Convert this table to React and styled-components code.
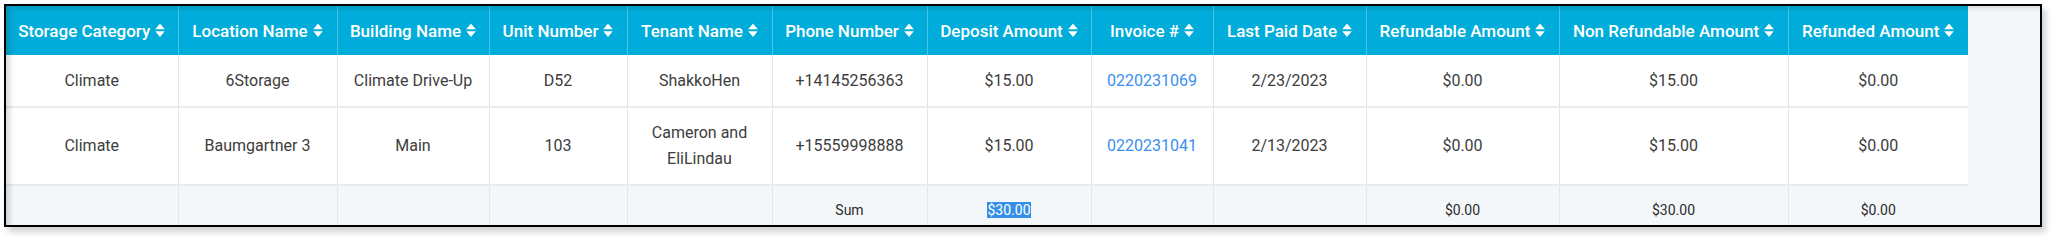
import React from "react";
import styled, { createGlobalStyle } from "styled-components";

const Global = createGlobalStyle`
  html, body { margin: 0; padding: 0; background: #ffffff; }
  body { font-family: Roboto, "Liberation Sans", Arial, sans-serif; }
`;

const Page = styled.div`
  padding: 4px 0 0 4px;
  width: 2054px;
  height: 240px;
  box-sizing: border-box;
`;

const Frame = styled.div`
  position: relative;
  width: 2038px;
  height: 223px;
  box-sizing: border-box;
  border: 2px solid #000;
  overflow: hidden;
  background: #f4f7f9;
  box-shadow: 4px 5px 6px rgba(0, 0, 0, 0.18);
  &::after {
    content: "";
    position: absolute;
    inset: 0;
    pointer-events: none;
    box-shadow: inset 5px 3px 6px -2px rgba(0, 0, 0, 0.18);
  }
`;

const Table = styled.table`
  border-collapse: collapse;
  table-layout: fixed;
  width: 1962px;
  font-family: Roboto, "Liberation Sans", Arial, sans-serif;
`;

const Col = styled.col`
  width: ${(p) => p.$w}px;
`;

const Th = styled.th`
  height: 49px;
  padding: 0 4px;
  background: #00acd9;
  color: #ffffff;
  font-size: 17px;
  font-weight: 500;
  text-align: center;
  white-space: nowrap;
  border-left: 1px solid #4fc3e4;
  &:first-child { border-left: none; }
`;

const HeadInner = styled.span`
  display: inline-flex;
  align-items: center;
  gap: 5px;
`;

const Td = styled.td`
  height: ${(p) => p.$h}px;
  padding: 0 8px;
  background: ${(p) => (p.$foot ? "#f4f7f9" : "#ffffff")};
  color: ${(p) => (p.$foot ? "#2a2a2a" : "#3d3d3d")};
  font-size: ${(p) => (p.$foot ? 14 : 16)}px;
  line-height: 26px;
  text-align: center;
  vertical-align: middle;
  box-sizing: border-box;
  border-left: 1px solid #e1e6ea;
  border-bottom: ${(p) => (p.$foot ? "none" : "2px solid #e8ecef")};
  &:first-child { border-left: none; }
`;

const Link = styled.a`
  color: #3b8ff0;
  text-decoration: none;
`;

const Selected = styled.span`
  background: #3390e6;
  color: #ffffff;
`;

const SortIcon = () => (
  <svg width="10" height="15" viewBox="0 0 10 15" aria-hidden="true">
    <path d="M5 0.5 L9.8 6.2 L0.2 6.2 Z" fill="#ffffff" />
    <path d="M0.2 8.3 L9.8 8.3 L5 14 Z" fill="#ffffff" />
  </svg>
);

const columns = [
  ["Storage Category", 172],
  ["Location Name", 159],
  ["Building Name", 152],
  ["Unit Number", 138],
  ["Tenant Name", 145],
  ["Phone Number", 155],
  ["Deposit Amount", 164],
  ["Invoice #", 122],
  ["Last Paid Date", 153],
  ["Refundable Amount", 193],
  ["Non Refundable Amount", 229],
  ["Refunded Amount", 180],
];

const rows = [
  {
    h: 52,
    cells: ["Climate", "6Storage", "Climate Drive-Up", "D52", "ShakkoHen", "+14145256363", "$15.00", "0220231069", "2/23/2023", "$0.00", "$15.00", "$0.00"],
  },
  {
    h: 78,
    cells: ["Climate", "Baumgartner 3", "Main", "103", "Cameron and EliLindau", "+15559998888", "$15.00", "0220231041", "2/13/2023", "$0.00", "$15.00", "$0.00"],
  },
];

const footer = ["", "", "", "", "", "Sum", "$30.00", "", "", "$0.00", "$30.00", "$0.00"];

export default function App() {
  return (
    <>
      <Global />
      <Page>
        <Frame>
          <Table>
            <colgroup>
              {columns.map(([name, w]) => (
                <Col key={name} $w={w} />
              ))}
            </colgroup>
            <thead>
              <tr>
                {columns.map(([name]) => (
                  <Th key={name}>
                    <HeadInner>
                      {name}
                      <SortIcon />
                    </HeadInner>
                  </Th>
                ))}
              </tr>
            </thead>
            <tbody>
              {rows.map((r, ri) => (
                <tr key={ri}>
                  {r.cells.map((c, ci) => (
                    <Td key={ci} $h={r.h}>
                      {ci === 7 ? <Link href="#">{c}</Link> : c}
                    </Td>
                  ))}
                </tr>
              ))}
              <tr>
                {footer.map((c, ci) => (
                  <Td key={ci} $h={48} $foot>
                    {ci === 6 ? <Selected>{c}</Selected> : c}
                  </Td>
                ))}
              </tr>
            </tbody>
          </Table>
        </Frame>
      </Page>
    </>
  );
}
